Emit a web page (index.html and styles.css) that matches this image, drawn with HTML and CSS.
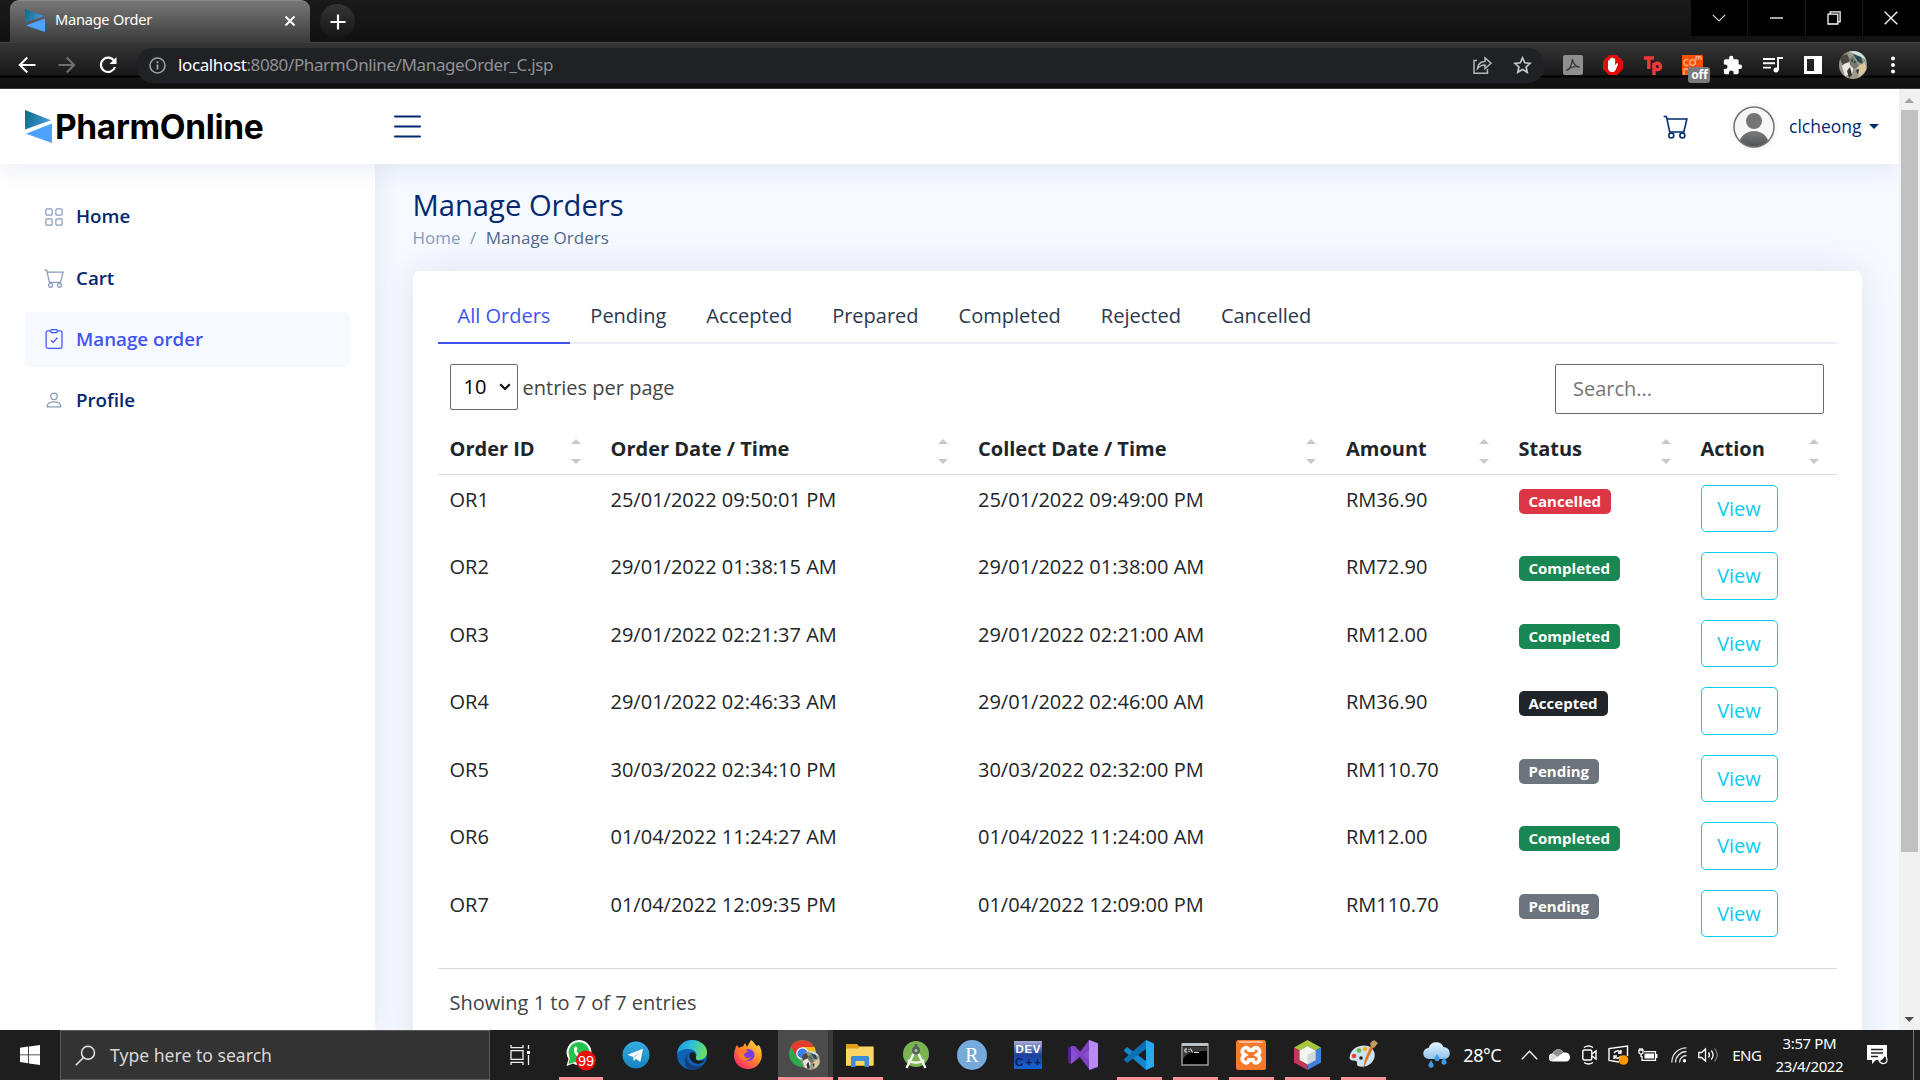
FILE: index.html
```html
<!DOCTYPE html>
<html lang="en">
<head>
<meta charset="utf-8">
<title>Manage Order</title>
<link rel="stylesheet" href="styles.css">
</head>
<body>
<svg class="defs" width="0" height="0" aria-hidden="true">
  <defs>
    <linearGradient id="g-teal" x1="0" y1="0" x2="1" y2="0.3"><stop offset="0" stop-color="#0a6a7c"/><stop offset="1" stop-color="#4596dd"/></linearGradient>
    <linearGradient id="g-tg" x1="0" y1="0" x2="0" y2="1"><stop offset="0" stop-color="#37aee2"/><stop offset="1" stop-color="#1582bd"/></linearGradient>
    <linearGradient id="g-edge" x1="0" y1="0" x2="1" y2="0.3"><stop offset="0" stop-color="#1b8fe0"/><stop offset="0.5" stop-color="#2fc0dc"/><stop offset="1" stop-color="#66de6a"/></linearGradient>
    <linearGradient id="g-fox" x1="1" y1="0" x2="0.2" y2="1"><stop offset="0" stop-color="#ffe847"/><stop offset="0.5" stop-color="#ff8a2a"/><stop offset="1" stop-color="#f5246b"/></linearGradient>
    <linearGradient id="g-man" x1="0" y1="0" x2="0" y2="1"><stop offset="0" stop-color="#7b7b7b"/><stop offset="1" stop-color="#33383d"/></linearGradient>
    <linearGradient id="g-dev" x1="0" y1="0" x2="0" y2="1"><stop offset="0" stop-color="#a9abd6"/><stop offset="0.5" stop-color="#1f3f9c"/><stop offset="1" stop-color="#1466d8"/></linearGradient>
    <linearGradient id="g-cloud" x1="0" y1="0" x2="0" y2="1"><stop offset="0" stop-color="#e6f4ff"/><stop offset="1" stop-color="#8fc4ee"/></linearGradient>
    <symbol id="mark" viewBox="0 0 28 34"><path d="M0 0L27 10.500L0 20z" fill="url(#g-teal)"/><path d="M28 14V34L1 24.500z" fill="#4da3fb"/></symbol>
    <symbol id="cart" viewBox="0 0 16 16"><path d="M.4 1.600H2.200L4.300 11.500H13.300L15.300 3.200H2.600" fill="none" stroke="currentColor" stroke-width="1"/><circle cx="5.300" cy="13.800" r="1.600" fill="none" stroke="currentColor"/><circle cx="12.400" cy="13.800" r="1.600" fill="none" stroke="currentColor"/></symbol>
    <symbol id="cat" viewBox="0 0 28 28"><clipPath id="cc"><circle cx="14" cy="14" r="14"/></clipPath><g clip-path="url(#cc)"><path fill="#9c9a8c" d="M0 0h28v28H0z"/><path fill="#cfe2e4" d="M9 0h19v9l-8-4z"/><path fill="#254c50" d="M14 3l8 3 2 7-5-2z"/><path fill="#4b4a44" d="M0 6l8-3 3 6-6 8z"/><path fill="#d9c7a0" d="M18 16l8-5 2 8-8 7z"/><path fill="#e9e7e2" d="M3 15c3-4 9-5 12-1l-2 9-7 2z"/><path fill="#77756e" d="M10 8l4-3 3 6 3 4-5 3-4-4z"/><path fill="#35322d" d="M8 20l3-4 2 8-3 3zM17 19l3-1-1 6zM12 9l2-1v3z"/><circle cx="16" cy="11" r="1.200" fill="#163"/></g></symbol>
  </defs>
</svg>

<header class="chrome">
  <div class="tabstrip">
    <div class="tab">
      <svg class="favicon" width="20" height="23" viewBox="0 0 28 34" preserveAspectRatio="none"><use href="#mark" width="28" height="34"/></svg>
      <span class="tab-title">Manage Order</span>
      <svg class="tab-close" width="12" height="12" viewBox="0 0 12 12"><path d="M1.500 1.500l9 9m0-9l-9 9" stroke="#fff" stroke-width="2"/></svg>
    </div>
    <div class="newtab"><svg width="16" height="16" viewBox="0 0 16 16"><path d="M8 .5v15M.5 8h15" stroke="#fff" stroke-width="2.200"/></svg></div>
    <div class="winbtns">
      <span><svg width="14" height="8" viewBox="0 0 14 8"><path d="M.8.8L7 7 13.200.8" fill="none" stroke="#ddd" stroke-width="1.100"/></svg></span>
      <span><svg width="13" height="2"><path d="M0 1h13" stroke="#fff" stroke-width="1.300"/></svg></span>
      <span><svg width="14" height="14" viewBox="0 0 14 14" fill="none" stroke="#fff" stroke-width="1.300"><path d="M1 3.200h9.800V13H1zM3.200 3V.9h9.900v9.900H11"/></svg></span>
      <span><svg width="14" height="14" viewBox="0 0 14 14"><path d="M.7.7l12.600 12.600m0-12.600L.7 13.300" stroke="#fff" stroke-width="1.300"/></svg></span>
    </div>
  </div>
  <div class="toolbar">
    <svg class="nav-back" width="18" height="18" viewBox="0 0 18 18" fill="none" stroke="#fff" stroke-width="2"><path d="M17.500 9H2M9.300 1.500L1.800 9l7.500 7.500"/></svg>
    <svg class="nav-fwd" width="18" height="18" viewBox="0 0 18 18" fill="none" stroke="#707070" stroke-width="2"><path d="M.5 9H16M8.700 1.500L16.200 9l-7.500 7.500"/></svg>
    <svg class="nav-reload" width="18" height="18" viewBox="0 0 18 18" fill="none" stroke="#fff" stroke-width="2.200"><path d="M15.300 5A7.200 7.200 0 1 0 16 11"/><path d="M17.500 1v7h-7z" fill="#fff" stroke="none"/></svg>
    <div class="omnibox">
      <svg width="17" height="17" viewBox="0 0 17 17"><circle cx="8.500" cy="8.500" r="7.500" fill="none" stroke="#9aa0a6" stroke-width="1.600"/><path d="M8.500 7.500v5M8.500 4.200v2" stroke="#9aa0a6" stroke-width="1.900"/></svg>
      <span class="url"><b>localhost</b>:8080/PharmOnline/ManageOrder_C.jsp</span>
      <svg class="share" width="19" height="18" viewBox="0 0 19 18" fill="none" stroke="#b4b7ba" stroke-width="1.500"><path d="M4 4.500H1v12.700h13.500V13"/><path d="M4.500 12.500C5 8 8 5.800 12 5.600V2l6 5.200-6 5.300V9C8.500 9 6.500 10 4.500 12.500z"/></svg>
      <svg class="star" width="19" height="18" viewBox="0 0 24 23"><path d="M12 2.500l2.900 6.200 6.700.7-5 4.600 1.400 6.700-6-3.400-6 3.400 1.400-6.700-5-4.600 6.700-.7z" fill="none" stroke="#c4c7ca" stroke-width="2.200"/></svg>
    </div>
    <div class="exts">
      <svg width="20" height="20" viewBox="0 0 20 20"><rect width="20" height="20" rx="2" fill="#8e8e8e"/><path d="M4 15c2 1 5-5 5.500-11 .5 4 3 8 7 8-5-1-9 0-12.500 3z" fill="none" stroke="#3b3b3b" stroke-width="1.400"/></svg>
      <svg width="20" height="20" viewBox="0 0 20 20"><path d="M6 0h8l6 6v8l-6 6H6l-6-6V6z" fill="#e30b0b"/><path d="M5 10.500V6c0-1 1.600-1 1.600 0V4c0-1 1.800-1 1.800 0V3.300c0-1 1.900-1 1.900 0V4c0-1 1.800-1 1.800 0v6.300l1.200-1.600c.7-1 2.200-.4 1.700.7l-2.500 5.600c-.7 1.500-1.600 2-3.200 2-2.700 0-4.300-1.600-4.300-4z" fill="#fff"/></svg>
      <svg width="20" height="20" viewBox="0 0 20 20" fill="none" stroke="#ee3a37" stroke-width="3.400"><path d="M1 3h10M5.800 3v11"/><path d="M11 20V8"/><circle cx="14.300" cy="11.500" r="3.300"/></svg>
      <span class="ext-com"><svg width="21" height="20" viewBox="0 0 21 20"><rect width="21" height="20" rx="1" fill="#ff4f04"/><g fill="none" stroke="#ffb48e" stroke-width="1.300"><path d="M6.500 5A3 3 0 1 0 6.500 10M14 5V1.500m0 .5c1-1 2.500-.8 2.500 1V5m0-2c0-2 2.500-2 2.500 0v2M2 20v-6h4"/><circle cx="10.500" cy="7.500" r="2.800"/></g></svg><i>off</i></span>
      <svg width="20" height="20" viewBox="1 0 23 23"><path fill="#fff" d="M20.500 11H19V7c0-1.100-.9-2-2-2h-4V3.500a2.500 2.500 0 0 0-5 0V5H4c-1.100 0-2 .9-2 2v3.800h1.500a2.700 2.700 0 0 1 0 5.400H2V20c0 1.100.9 2 2 2h3.800v-1.500a2.700 2.700 0 0 1 5.400 0V22H17c1.100 0 2-.9 2-2v-4h1.500a2.500 2.500 0 0 0 0-5z"/></svg>
      <svg width="20" height="20" viewBox="0 0 20 20" fill="none" stroke="#fff" stroke-width="1.900"><path d="M0 4h12M0 8.300h12M0 12.600h8M15 15V3h5"/><circle cx="13" cy="15" r="2.500" fill="#fff" stroke="none"/></svg>
      <svg width="20" height="20" viewBox="0 0 20 20"><path d="M1 1h18v18H1zM4 4v12h7V4z" fill="#fff" fill-rule="evenodd"/></svg>
    </div>
    <svg class="me" width="28" height="28"><use href="#cat"/></svg>
    <svg class="dots" width="4" height="18" fill="#fff"><circle cx="2" cy="2.500" r="2"/><circle cx="2" cy="9" r="2"/><circle cx="2" cy="15.500" r="2"/></svg>
  </div>
</header>

<div class="viewport">
  <div class="page">
    <div class="topbar">
      <a class="logo"><svg width="27" height="33" viewBox="0 0 28 34" preserveAspectRatio="none"><use href="#mark" width="28" height="34"/></svg><span>PharmOnline</span></a>
      <svg class="burger" width="27" height="23" viewBox="0 0 27 23" stroke="#012970" stroke-width="2" stroke-linecap="round"><path d="M1 1.500h25M1 11.500h25M1 21.500h25"/></svg>
      <svg class="topcart" width="25" height="25"><use href="#cart"/></svg>
      <svg class="avatar" width="50" height="50" viewBox="0 0 50 50"><clipPath id="av"><circle cx="25" cy="25" r="19.500"/></clipPath><circle cx="25" cy="25" r="24.500" fill="#fafafa"/><circle cx="25" cy="25" r="20" fill="#f7f7f7" stroke="#6f7072" stroke-width="1.500"/><g clip-path="url(#av)"><circle cx="25" cy="19" r="8" fill="#757575"/><ellipse cx="25" cy="42" rx="14.500" ry="13" fill="url(#g-man)"/></g></svg>
      <span class="user">clcheong</span><i class="caret"></i>
    </div>
    <div class="columns">
      <nav class="sidebar">
        <a><svg width="20" height="20" viewBox="0 0 16 16" fill="none" stroke="currentColor"><rect x="1.500" y="1.500" width="5" height="5" rx="1"/><rect x="9.500" y="1.500" width="5" height="5" rx="1"/><rect x="1.500" y="9.500" width="5" height="5" rx="1"/><rect x="9.500" y="9.500" width="5" height="5" rx="1"/></svg>Home</a>
        <a><svg width="20" height="20"><use href="#cart"/></svg>Cart</a>
        <a class="active"><svg width="20" height="20" viewBox="0 0 16 16" fill="none" stroke="currentColor"><path d="M5 1.500H3a1.300 1.300 0 0 0-1.300 1.300V14A1.400 1.400 0 0 0 3 15.400h10a1.400 1.400 0 0 0 1.400-1.400V2.800A1.300 1.300 0 0 0 13 1.500h-2"/><rect x="5.500" y=".5" width="5" height="2.400" rx=".6"/><path d="M5.500 9l1.800 1.700L10.700 7"/></svg>Manage order</a>
        <a><svg width="20" height="20" viewBox="0 0 16 16" fill="none" stroke="currentColor"><circle cx="8" cy="5" r="2.600"/><path d="M2.500 13.500c0-3 2.300-4 5.500-4s5.500 1 5.500 4z" stroke-linejoin="round"/></svg>Profile</a>
      </nav>
      <main class="main">
        <h1>Manage Orders</h1>
        <div class="crumbs"><span>Home</span><i>/</i><b>Manage Orders</b></div>
        <section class="card">
          <ul class="tabs"><li class="on">All Orders</li><li>Pending</li><li>Accepted</li><li>Prepared</li><li>Completed</li><li>Rejected</li><li>Cancelled</li></ul>
          <div class="controls">
            <span class="select">10<svg width="12" height="8" viewBox="0 0 12 8"><path d="M1.200 1.200L6 6l4.800-4.800" fill="none" stroke="#111" stroke-width="2.200"/></svg></span>
            <span class="per">entries per page</span>
            <input class="search" type="text" placeholder="Search...">
          </div>
          <table>
            <colgroup><col class="c1"><col class="c2"><col class="c3"><col class="c4"><col class="c5"><col class="c6"></colgroup>
            <thead><tr>
              <th><div>Order ID<i></i></div></th><th><div>Order Date / Time<i></i></div></th><th><div>Collect Date / Time<i></i></div></th><th><div>Amount<i></i></div></th><th><div>Status<i></i></div></th><th><div>Action<i></i></div></th>
            </tr></thead>
            <tbody>
              <tr><td>OR1</td><td>25/01/2022 09:50:01 PM</td><td>25/01/2022 09:49:00 PM</td><td>RM36.90</td><td><span class="badge red">Cancelled</span></td><td><a class="btn">View</a></td></tr>
              <tr><td>OR2</td><td>29/01/2022 01:38:15 AM</td><td>29/01/2022 01:38:00 AM</td><td>RM72.90</td><td><span class="badge green">Completed</span></td><td><a class="btn">View</a></td></tr>
              <tr><td>OR3</td><td>29/01/2022 02:21:37 AM</td><td>29/01/2022 02:21:00 AM</td><td>RM12.00</td><td><span class="badge green">Completed</span></td><td><a class="btn">View</a></td></tr>
              <tr><td>OR4</td><td>29/01/2022 02:46:33 AM</td><td>29/01/2022 02:46:00 AM</td><td>RM36.90</td><td><span class="badge dark">Accepted</span></td><td><a class="btn">View</a></td></tr>
              <tr><td>OR5</td><td>30/03/2022 02:34:10 PM</td><td>30/03/2022 02:32:00 PM</td><td>RM110.70</td><td><span class="badge gray">Pending</span></td><td><a class="btn">View</a></td></tr>
              <tr><td>OR6</td><td>01/04/2022 11:24:27 AM</td><td>01/04/2022 11:24:00 AM</td><td>RM12.00</td><td><span class="badge green">Completed</span></td><td><a class="btn">View</a></td></tr>
              <tr><td>OR7</td><td>01/04/2022 12:09:35 PM</td><td>01/04/2022 12:09:00 PM</td><td>RM110.70</td><td><span class="badge gray">Pending</span></td><td><a class="btn">View</a></td></tr>
            </tbody>
          </table>
          <div class="summary">Showing 1 to 7 of 7 entries</div>
        </section>
      </main>
    </div>
  </div>
  <div class="scrollbar">
    <svg width="21" height="21"><path d="M5.500 14h9.500l-4.750-5z" fill="#a3a3a3"/></svg>
    <div class="thumb"></div>
    <svg width="21" height="21"><path d="M5.500 8h9.500l-4.750 5z" fill="#505050"/></svg>
  </div>
</div>

<footer class="taskbar">
  <div class="start"><svg width="20" height="20" viewBox="0 0 20 20" fill="#fff"><path d="M0 2.700l8.200-1.100v7.900H0zM9 1.500L20 0v9.500H9zM0 10.300h8.200v7.900L0 17.100zM9 10.300h11V20L9 18.400z"/></svg></div>
  <div class="tsearch"><svg width="21" height="21" viewBox="0 0 21 21" fill="none" stroke="#e8e8e8" stroke-width="1.500"><circle cx="13" cy="7.800" r="6.500"/><path d="M8.500 12.500L.8 20.200"/></svg><span>Type here to search</span></div>
  <div class="taskview"><svg width="21" height="20" viewBox="0 0 21 20" fill="none" stroke="#eee" stroke-width="1.300"><path d="M1 0v2.700h12V0M1 20v-2.700h12V20M1 5.700h12v8.600H1zM18.500 0v4M18.500 10v10"/><path d="M17 6h3v3h-3z" fill="#fff" stroke="none"/></svg></div>
  <div class="apps">
    <div class="app run"><svg width="30" height="32" viewBox="0 0 30 32"><path d="M13 1a12.500 12.500 0 0 1 0 25c-2.300 0-4-.5-6-1.500L.5 27l2-7A12.500 12.500 0 0 1 13 1z" fill="#fff"/><circle cx="13" cy="13.500" r="10.500" fill="#27c14e"/><path d="M4 18l-1.500 7 7-2z" fill="#27c14e"/><path d="M8.500 8c1.500-1 2.500 0 3 2l-1 2c1 2 2 3 4 4l2-1 3 2c-1 3-4 3-7 1.500C9 16.500 7 12 8.500 8z" fill="#fff"/><circle cx="20" cy="21.500" r="10" fill="#f00a0a"/><text x="20" y="26.500" text-anchor="middle" font-size="14.500" fill="#fff">99</text></svg></div>
    <div class="app"><svg width="28" height="28" viewBox="0 0 28 28"><circle cx="14" cy="14" r="13.500" fill="url(#g-tg)"/><path d="M5.500 13.800L21 7.700l-2.700 13.200-4.300-3.100-2.200 2.200-.6-4z" fill="#fff"/><path d="M11.200 16L18 10.300l-5 6.400z" fill="#a9cbe0"/></svg></div>
    <div class="app"><svg width="30" height="30" viewBox="0 0 30 30"><circle cx="15" cy="15" r="15" fill="#0f62b5"/><path d="M0 14C1 5 7 0 15 0c9 0 15 6 15 12 0 5-4 8-8 8-3 0-4-1-3-3 2-4-2-8-7-8C6 9 1 11 0 14z" fill="url(#g-edge)"/><path d="M11 14c-3 6 2 12 8 12 4 0 7-1 8-2-3 5-8 6-12 6-8 0-9-13-4-16z" fill="#143f78"/><path d="M13 13c2-2 6 0 6 3 0 2-1 2 0 3.500 1.500 2 6 2 9 0-2 4-6 5-9 4-5-1-8-6-6-10.500z" fill="#1b1b1b"/></svg></div>
    <div class="app"><svg width="30" height="30" viewBox="0 0 30 30"><path d="M4 5l2 3c1-1 3-1.500 4-1.500L12 3l2 4 4-7c4 3 4 5 6 6l2-1c3 5 4 12 1 17s-7 7-12 7C7 29 1 23 1 16c0-4 1-8 3-11z" fill="url(#g-fox)"/><circle cx="15.500" cy="15" r="6" fill="#7a3ce0"/><path d="M6 10c3-2 7-1 9 1l-4 3c0 4 4 5 7 3-2 4-9 5-12 0z" fill="#ff7a25"/></svg></div>
    <div class="app run current"><svg width="31" height="31" viewBox="0 0 31 31"><circle cx="13.500" cy="13.500" r="13.500" fill="#2da94f"/><path d="M2 6.500C6-2 21-2 25 6.500L13.500 14l-6 3z" fill="#e33b2e"/><path d="M14 7h11.500c4 9-2 20-12 20l6-10z" fill="#fdbd10"/><circle cx="13.500" cy="13.500" r="6.300" fill="#fff"/><circle cx="13.500" cy="13.500" r="5" fill="#3b7ded"/><svg x="12" y="11" width="19" height="19"><use href="#cat" width="19" height="19"/></svg></svg></div>
    <div class="app run"><svg width="28" height="24" viewBox="0 0 28 24"><path d="M0 1h11l3 3h13.500v19H0z" fill="#e0a01a"/><path d="M0 5.500h12l2-2h13.500V22H0z" fill="#fbd566"/><path d="M5 24V14.500a1.500 1.500 0 0 1 1.500-1.500h15a1.500 1.500 0 0 1 1.500 1.500V24h-4.500v-6h-9v6z" fill="#3b8fd8"/></svg></div>
    <div class="app"><svg width="28" height="30" viewBox="0 0 28 30"><circle cx="14" cy="14" r="13" fill="#7ab552"/><path d="M14 9L4.500 28M14 9l9.500 19M6 20c5 3.500 11 3.500 16 0" fill="none" stroke="#f1f1f1" stroke-width="2.500"/><circle cx="14" cy="10.500" r="4" fill="#59615e"/><path d="M12.500 4h3v5h-3z" fill="#59615e"/><circle cx="14" cy="10.500" r="1.500" fill="#aac79a"/></svg></div>
    <div class="app"><svg width="30" height="30" viewBox="0 0 30 30"><circle cx="15" cy="15" r="15" fill="#75aadb"/><text class="rletter" x="15" y="21.500" text-anchor="middle" font-size="20" fill="#fff">R</text></svg></div>
    <div class="app"><svg width="28" height="28" viewBox="0 0 28 28"><path fill="url(#g-dev)" d="M0 0h28v28H0z"/><text class="devt" x="14" y="11.500" text-anchor="middle" textLength="25" font-size="11.500" fill="#fff">DEV</text><text class="devt" x="14" y="25" text-anchor="middle" textLength="26" font-size="11.500" fill="#0a1e52">C++</text></svg></div>
    <div class="app"><svg width="30" height="30" viewBox="0 0 30 30"><path d="M0 8l3-2 18 15V9L3 24l-3-2 3-3V11z" fill="#8a4fd0"/><path d="M0 8l3-2v18l-3-2z" fill="#52218f"/><path d="M3 24L21 0l9 3v24l-8 3L3 6l4 0 14 15V9L7 21z" fill="#8242c4"/><path d="M21 0l9 3.500v23L21 30z" fill="#b98af0"/></svg></div>
    <div class="app run"><svg width="30" height="30" viewBox="0 0 30 30"><path d="M0 10l3-3 19 14v9L0 11z" fill="#1586cf"/><path d="M0 20l3 3L22 9V0L0 19z" fill="#0c6eb5"/><path d="M22 0l8 3.500v23L22 30z" fill="#2aa9f3"/></svg></div>
    <div class="app run"><svg width="28" height="24" viewBox="0 0 28 24"><path d="M1 1h26v21H1z" fill="#000" stroke="#999" stroke-width="1.500"/><path d="M1 0h26v3H1z" fill="#bcc3c8"/><path d="M2 3.500h24V8C14 8 5 10 2 16z" fill="#3c3c3c"/><path d="M6 6H4v3h2M8 6v1m0 1v1M9.500 5.500l2 4M13 9.500h5" stroke="#eee" fill="none"/></svg></div>
    <div class="app run"><svg width="30" height="30" viewBox="0 0 30 30"><rect width="30" height="30" rx="2.500" fill="#f5792a"/><path d="M3 1h24v2H3z" fill="#fdbb8d"/><path d="M7.500 9c2.500-2.500 5-1 5.500 1.200h4c.5-2.200 3-3.700 5.500-1.200s1 4.500-1.500 6c2.500 1.500 4 4 1.500 6.500s-5 1-5.500-1.500h-4c-.5 2.500-3 4-5.500 1.500S6.500 16.500 9 15c-2.500-1.500-4-3.500-1.500-6z" fill="none" stroke="#fff" stroke-width="3.800"/></svg></div>
    <div class="app run"><svg width="27" height="30" viewBox="0 0 27 30"><path d="M13.500 0L27 7.500l-5.500 3-8-4.500-8 4.500L0 7.500z" fill="#a5c63b"/><path d="M0 7.500l5.500 3v9.500l8 4.500V30L0 22.500z" fill="#c0395a"/><path d="M27 7.500v15L13.500 30v-5.500l8-4.500v-9.500z" fill="#3f80d8"/><path d="M13.500 6l8 4.500v9.500l-8 4.500-8-4.500v-9.500z" fill="#f3f6ee"/><path d="M13.500 15l8-4.500v9.500l-8 4.500z" fill="#cfd8dc"/></svg></div>
    <div class="app run"><svg width="30" height="30" viewBox="0 0 30 30"><path d="M2 15C4 8 12 4 20 6c6 2 8 8 6 13-3 7-11 9-16 7-2-1 0-4-2-5s-8 1-6-6z" fill="#cbe2f2"/><circle cx="6" cy="16" r="2.300" fill="#e84236"/><circle cx="11" cy="10.500" r="2.300" fill="#63b845"/><circle cx="17" cy="9" r="2.300" fill="#f6b126"/><circle cx="13" cy="18" r="1.800" fill="#1c1c1c"/><path d="M26 6L15 29l2-10 6-14z" fill="#d97820"/><path d="M22 3l4-3 4 3-4 5-3-2z" fill="#c39a62"/></svg></div>
  </div>
  <div class="tray">
    <svg class="t-weather" width="28" height="26" viewBox="0 0 28 26"><path d="M6 17a5.500 5.500 0 0 1-.5-11C7 1.500 10-.2 14 .3c3.500.3 5.500 2.200 6.500 4.700C29 5.500 28.500 17 21 17z" fill="url(#g-cloud)"/><g fill="#3f9bea"><path d="M8 18l2.500 4.500a2.600 2.600 0 1 1-5 0zM14 12l2.500 4a2.600 2.600 0 1 1-5 0zM21 15l2.500 4.500a2.600 2.600 0 1 1-5 0z"/></g></svg>
    <span class="temp">28°C</span>
    <svg class="t-up" width="17" height="10" viewBox="0 0 17 10"><path d="M.8 9.200L8.500 1.300l7.700 7.900" fill="none" stroke="#fff" stroke-width="1.400"/></svg>
    <svg class="t-cloud" width="21" height="14" viewBox="0 0 21 14"><path d="M4 13.500a4 4 0 0 1-.5-8C5 1 12-.8 14.500 4.500c4-.5 6.500 1 6.500 5 0 2-1.500 4-4 4z" fill="#fff"/><path d="M4 5.500C5 1 12-.8 14.500 4.500L8 9z" fill="#8d8d8d"/><path d="M.5 8.500C2 5 5 5 8 9l-5 4c-2-.5-3-2.500-2.500-4.500z" fill="#d9d9d9"/></svg>
    <svg class="t-cam" width="15" height="20" viewBox="0 0 15 20" fill="none" stroke="#fff" stroke-width="1.400"><rect x=".8" y="5" width="9" height="10" rx="1.500"/><path d="M10 9l4-3v8l-4-3M2 2.500C5 .5 8 .5 11 2.500M2 17.500c3 2 6 2 9 0"/></svg>
    <svg class="t-upd" width="21" height="20" viewBox="0 0 21 20" fill="none" stroke="#fff" stroke-width="1.400"><path d="M11 17L1 15.500v-12L19.500 1v10M6 8c2-3 6-3 7 0m0-3v3h-3M13 11c-2 3-6 3-7 0m0 3v-3h3"/><circle cx="15.500" cy="15" r="4.800" fill="#ff9800" stroke="none"/></svg>
    <svg class="t-bat" width="20" height="14" viewBox="0 0 20 14" fill="none" stroke="#fff" stroke-width="1.300"><path d="M6 3.700h11.500v8.600H4V8M18.800 6v4M1 2h4v3L3 6.500 1 5zM2 2V0m2 2V0M3 6v3"/><path d="M6.500 5.500h9.500v5H6.500z" fill="#fff" stroke="none"/></svg>
    <svg class="t-wifi" width="16" height="16" viewBox="0 0 16 16" fill="none" stroke="#ddd" stroke-width="1.300"><path d="M.8 15.500C1 7 7 1 15.500.8M4.500 15.500c0-6 5-11 11-11M8.500 15.500c0-4 3-7 7-7"/><circle cx="13.500" cy="13.800" r="1.700" fill="#fff" stroke="none"/></svg>
    <svg class="t-vol" width="21" height="16" viewBox="0 0 21 16" fill="none" stroke="#fff" stroke-width="1.300"><path d="M.8 5.500h2.700L7.500 2v12l-4-3.500H.8zM10.500 5.500c1.200 1.500 1.200 3.500 0 5M13.300 3.500c2.200 2.700 2.200 6.300 0 9"/><path d="M16.500 1.500c3.500 4 3.500 9 0 13" stroke="#777"/></svg>
    <span class="lang">ENG</span>
    <div class="clock"><span>3:57 PM</span><span>23/4/2022</span></div>
    <svg class="t-note" width="21" height="21" viewBox="0 0 21 21"><path d="M0 0h20v15H9l-4 4v-4H0z" fill="#fff"/><path d="M4 4.500h12M4 8h12M4 11.500h7" stroke="#222" stroke-width="1.300"/><path d="M17 10.500c-1 3-2.500 4.500-5 5 1.500 4 8 4.500 8-1 0-2-1-3.500-3-4z" fill="#1e1e1e" stroke="#fff" stroke-width="1.200"/></svg>
  </div>
</footer>
</body>
</html>
```
FILE: styles.css
```css
* { box-sizing: border-box; }
html, body { margin: 0; height: 1080px; overflow: hidden; }
body { width: 1920px; display: flex; flex-direction: column; font-family: "Open Sans", "Noto Sans", sans-serif; font-size: 20px; line-height: 1.5; color: #212529; background: #fff; }
svg { display: block; flex: none; }
.defs { position: absolute; }
i { font-style: normal; }

/* browser frame */
.chrome { height: 89px; flex: none; background: #111; border-bottom: 1px solid #3c3c3c; color: #fff; font-family: "Noto Sans", "Open Sans", sans-serif; }
.tabstrip { height: 42px; display: flex; background: linear-gradient(#1a1a1a, #111); padding-left: 10px; }
.tab { width: 300px; height: 43px; display: flex; align-items: center; padding: 0 14px 3px 15px; border-radius: 9px 9px 0 0; background: linear-gradient(#777, #393939); border-top: 1px solid #888; }
.tab-title { margin: -1px 0 0 10px; flex: 1; font-size: 14.600px; letter-spacing: -0.25px; }
.newtab { width: 35px; height: 35px; margin: 4px 0 0 10px; border-radius: 50%; background: linear-gradient(#353535, #141414); display: grid; place-items: center; }
.winbtns { margin-left: auto; height: 36px; display: grid; grid-template-columns: repeat(4, 57.250px); background: #000; }
.winbtns span { display: grid; place-items: center; border-right: 1px solid #181818; }
.winbtns span:last-child { border-right: 0; }
.toolbar { height: 46px; display: flex; align-items: center; border-top: 1px solid #484848; background: linear-gradient(#363636, #181818 32px, #000 33px, #000 34px, #151515 35px, #0e0e0e); padding: 0 0 1px 18px; }
.nav-fwd { margin-left: 22px; }
.nav-reload { margin-left: 23px; }
.omnibox { margin-left: 19px; width: 1409px; height: 35px; border-radius: 18px; background: #202124; display: flex; align-items: center; padding: 0 13px 0 13px; }
.url { margin-left: 12px; flex: 1; font-size: 17px; letter-spacing: -0.38px; color: #8f9296; line-height: 30px; }
.url b { font-weight: 400; color: #fff; }
.star { margin-left: 21px; }
.exts { margin-left: 18px; width: 260px; display: flex; justify-content: space-between; }
.ext-com { position: relative; }
.ext-com i { position: absolute; left: 6px; top: 12px; width: 22px; height: 16px; border-radius: 3px; background: #797b7d; font: 700 12px/16px "Open Sans", sans-serif; text-align: center; }
.me { margin-left: 16px; }
.dots { margin-left: 24px; }

/* page */
.viewport { height: 941px; flex: none; display: flex; overflow: hidden; }
.page { width: 1899px; display: flex; flex-direction: column; overflow: hidden; }
.topbar { position: relative; z-index: 2; height: 75px; flex: none; display: flex; align-items: center; padding: 0 20px 0 25px; background: #fff; box-shadow: 0 2.500px 25px rgba(1, 41, 112, .1); color: #012970; }
.logo { width: 369px; display: flex; align-items: center; color: #000; }
.logo span { margin-left: 3px; font: 700 33.500px/40px Inter, sans-serif; letter-spacing: -0.350px; }
.topcart { margin-left: auto; }
.avatar { margin-left: 41px; }
.user { margin-left: 10px; font-size: 17.500px; font-weight: 500; width: 80px; }
.caret { width: 10px; border: 5px solid transparent; border-top-color: #012970; border-bottom: 0; }
.columns { flex: 1; display: flex; min-height: 0; }
.sidebar { position: relative; z-index: 1; width: 375px; flex: none; padding: 25px 25px; background: #fff; box-shadow: 0 0 25px rgba(1, 41, 112, .1); display: flex; flex-direction: column; gap: 6.250px; }
.sidebar a { height: 55px; display: flex; align-items: center; gap: 12px; padding-left: 19px; border-radius: 5px; font-size: 18.750px; font-weight: 600; color: #012970; }
.sidebar a svg { color: #899bbd; }
.sidebar .active, .sidebar .active svg { color: #4154f1; }
.sidebar .active { background: #f6f9ff; }
.main { flex: 1; background: #f6f9ff; padding: 23px 37px 0 37.500px; }
h1 { margin: 0; font-size: 29.200px; line-height: 36px; font-weight: 500; color: #012970; }
.crumbs { display: flex; height: 26px; align-items: center; margin-top: 2px; font-size: 17px; color: #899bbd; }
.crumbs i { margin: 0 9.500px; }
.crumbs b { font-weight: 500; color: #51678f; }
.card { margin-top: 20px; height: 1000px; padding: 20px 25px; border-radius: 6px; background: #fff; box-shadow: 0 0 37px rgba(1, 41, 112, .1); }
.tabs { list-style: none; margin: 0; padding: 0; display: flex; height: 53px; border-bottom: 2px solid #ebeef4; }
.tabs li { height: 53px; padding: 10px 20px; color: #2c384e; }
.tabs .on { color: #4154f1; border-bottom: 2px solid #4154f1; }
.controls { display: flex; align-items: flex-start; padding: 20px 13px 0 12px; height: 79px; }
.select { width: 68px; height: 46px; display: flex; align-items: center; justify-content: space-between; padding: 0 6px 0 13px; border: 1px solid #6b6b6b; border-radius: 2px; color: #000; }
.per { margin: 9px 0 0 5px; color: #444; }
.search { margin-left: auto; width: 269px; height: 50px; padding: 0 16px 2px 17px; border: 1px solid #6b6b6b; border-radius: 2px; font: 20px "Open Sans", sans-serif; }
.search::placeholder { color: #757575; opacity: 1; }
table { width: 1399px; table-layout: fixed; border-collapse: collapse; border-bottom: 1px solid #d9d9d9; }
.c1 { width: 161px; } .c2 { width: 367.500px; } .c3 { width: 368px; } .c4 { width: 172.500px; } .c5 { width: 182px; } .c6 { width: 148px; }
th { height: 51px; padding: 2px 18px 0 12px; text-align: left; font-weight: 700; border-bottom: 1px solid #d9d9d9; }
th div { display: flex; align-items: center; justify-content: space-between; }
th i { display: flex; flex-direction: column; gap: 15px; margin-top: 4px; }
th i::before { content: ""; border: 5px solid transparent; border-top: 0; border-bottom-color: #c9c9c9; }
th i::after { content: ""; border: 5px solid transparent; border-bottom: 0; border-top-color: #c9c9c9; }
td { height: 67.500px; padding: 10px 12px; vertical-align: top; }
tbody tr:last-child td { height: 89px; }
.badge { display: block; width: max-content; margin-top: 4px; padding: 5px 10px; border-radius: 5px; font-size: 15px; line-height: 15px; font-weight: 700; color: #fff; }
.red { background: #dc3545; } .green { background: #198754; } .dark { background: #212529; } .gray { background: #6c757d; }
.btn { display: block; width: 77px; height: 47.500px; border: 1px solid #0dcaf0; border-radius: 5px; color: #0dcaf0; text-align: center; line-height: 46px; }
.summary { padding: 19px 12px; color: #444; }
.scrollbar { width: 21px; background: #f1f1f1; display: flex; flex-direction: column; }
.thumb { width: 17px; height: 742px; margin: 0 2px auto; background: #c1c1c1; }

/* taskbar */
.taskbar { height: 50px; flex: none; display: flex; background: #1e1e1e; color: #fff; font-family: "Noto Sans", "Open Sans", sans-serif; }
.start { width: 60px; display: grid; place-items: center; }
.tsearch { width: 430px; display: flex; align-items: center; gap: 14px; padding-left: 14px; background: #333; border: 1px solid #5a5a5a; color: #d8d8d8; font-size: 17.600px; }
.taskview { width: 63px; display: grid; place-items: center; padding-right: 3px; }
.apps { display: grid; grid-template-columns: repeat(15, 55.900px); }
.app { display: grid; place-items: center; margin: 0 5.500px; border-bottom: 3px solid transparent; padding: 3px 1px 0 0; }
.app:first-child { padding: 3px 0 0 1px; }
.app text { font-family: "Liberation Sans", sans-serif; }
.app .rletter { font-family: "Liberation Serif", serif; }
.app .devt { font-weight: 700; }
.run { border-bottom-color: #ff9096; }
.current { margin: 0 -1px 0 1px; padding-right: 3px; background: linear-gradient(90deg, #4b4b4b 50px, #2c2c2c 50px, #3a3a3a 51px); }
.tray { flex: 1; display: flex; align-items: center; padding-left: 32px; border-right: 6px solid #1e1e1e; }
.temp { margin-left: 12px; width: 58px; font-size: 18px; letter-spacing: -0.5px; }
.t-cloud { margin-left: 11px; } .t-cam { margin-left: 12px; } .t-upd { margin-left: 11px; } .t-bat { margin-left: 9px; } .t-wifi { margin-left: 13px; } .t-vol { margin-left: 11px; }
.lang { margin-left: 13px; width: 37px; font-size: 15px; letter-spacing: -0.6px; }
.clock { width: 80px; display: flex; flex-direction: column; text-align: center; font-size: 15px; line-height: 23px; letter-spacing: -0.4px; }
.t-note { margin-left: 18px; }
.tray::after { content: ""; width: 1px; height: 50px; margin-left: auto; background: #777; }
```
